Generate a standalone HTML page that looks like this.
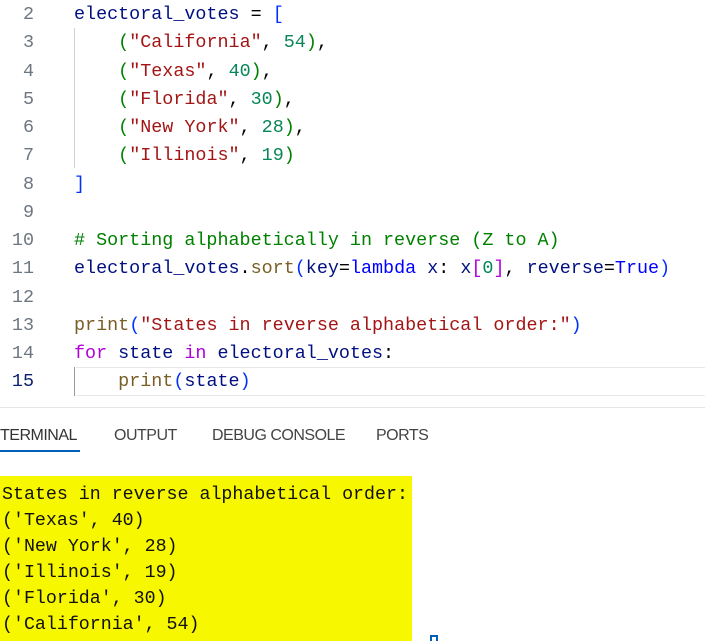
<html><head><style>
body{margin:0;width:705px;height:641px;background:#fff;overflow:hidden;position:relative;font-family:"Liberation Mono",monospace}
.l{position:absolute;left:0;height:29px;line-height:29px;font-size:18.4px;white-space:pre;color:#001080}
.n{position:absolute;left:0;width:34px;text-align:right;color:#6e7681}
.c{position:absolute;left:74px}
.s{color:#a31515}.d{color:#098658}.k{color:#af00db}.b{color:#0431fa}.f{color:#795e26}.g{color:#008000}.t{color:#000}
.tab{position:absolute;top:427px;font:16px "Liberation Sans",sans-serif;color:#444;letter-spacing:-0.5px}
.term{position:absolute;left:0;top:476px;width:412px;height:165px;background:#f7f700}
.tl{position:absolute;left:2px;font-size:18.3px;line-height:26px;white-space:pre;color:#111}
</style></head><body>
<div style="position:absolute;left:74px;top:28px;width:1px;height:140px;background:#d0d0d0"></div>
<div style="position:absolute;left:76px;top:367px;width:629px;height:27px;border-top:1px solid #e8e8e8;border-bottom:1px solid #e8e8e8"></div>
<div style="position:absolute;left:74px;top:367px;width:1px;height:29px;background:#999"></div>
<div class="l" style="top:0"><span class="n">2</span><span class="c">electoral_votes <span class="t">=</span> <span class="b">[</span></span></div>
<div class="l" style="top:28px"><span class="n">3</span><span class="c">    <span class="g">(</span><span class="s">"California"</span><span class="t">,</span> <span class="d">54</span><span class="g">)</span><span class="t">,</span></span></div>
<div class="l" style="top:57px"><span class="n">4</span><span class="c">    <span class="g">(</span><span class="s">"Texas"</span><span class="t">,</span> <span class="d">40</span><span class="g">)</span><span class="t">,</span></span></div>
<div class="l" style="top:85px"><span class="n">5</span><span class="c">    <span class="g">(</span><span class="s">"Florida"</span><span class="t">,</span> <span class="d">30</span><span class="g">)</span><span class="t">,</span></span></div>
<div class="l" style="top:113px"><span class="n">6</span><span class="c">    <span class="g">(</span><span class="s">"New York"</span><span class="t">,</span> <span class="d">28</span><span class="g">)</span><span class="t">,</span></span></div>
<div class="l" style="top:141px"><span class="n">7</span><span class="c">    <span class="g">(</span><span class="s">"Illinois"</span><span class="t">,</span> <span class="d">19</span><span class="g">)</span></span></div>
<div class="l" style="top:170px"><span class="n">8</span><span class="c"><span class="b">]</span></span></div>
<div class="l" style="top:198px"><span class="n">9</span></div>
<div class="l" style="top:226px"><span class="n">10</span><span class="c g"># Sorting alphabetically in reverse (Z to A)</span></div>
<div class="l" style="top:254px"><span class="n">11</span><span class="c">electoral_votes<span class="t">.</span><span class="f">sort</span><span class="b">(</span>key<span class="t">=</span><span style="color:#0000ff">lambda</span> x<span class="t">:</span> x<span class="k">[</span><span class="d">0</span><span class="k">]</span><span class="t">,</span> reverse<span class="t">=</span><span style="color:#0000ff">True</span><span class="b">)</span></span></div>
<div class="l" style="top:283px"><span class="n">12</span></div>
<div class="l" style="top:311px"><span class="n">13</span><span class="c"><span class="f">print</span><span class="b">(</span><span class="s">"States in reverse alphabetical order:"</span><span class="b">)</span></span></div>
<div class="l" style="top:339px"><span class="n">14</span><span class="c"><span class="k">for</span> state <span class="k">in</span> electoral_votes<span class="t">:</span></span></div>
<div class="l" style="top:367px"><span class="n" style="color:#0b216f">15</span><span class="c">    <span class="f">print</span><span class="b">(</span>state<span class="b">)</span></span></div>
<div style="position:absolute;left:0;top:407px;width:705px;height:1px;background:#e5e5e5"></div>
<div class="tab" style="left:0;color:#333">TERMINAL</div>
<div style="position:absolute;left:0;top:450px;width:80px;height:2px;background:#005fb8"></div>
<div class="tab" style="left:114px">OUTPUT</div>
<div class="tab" style="left:212px">DEBUG CONSOLE</div>
<div class="tab" style="left:376px">PORTS</div>
<div class="term"></div>
<div class="tl" style="top:482px">States in reverse alphabetical order:
('Texas', 40)
('New York', 28)
('Illinois', 19)
('Florida', 30)
('California', 54)</div>
<div style="position:absolute;left:430px;top:635px;width:8px;height:6px;border:2px solid #005fb8;border-bottom:none;box-sizing:border-box"></div>
</body></html>
